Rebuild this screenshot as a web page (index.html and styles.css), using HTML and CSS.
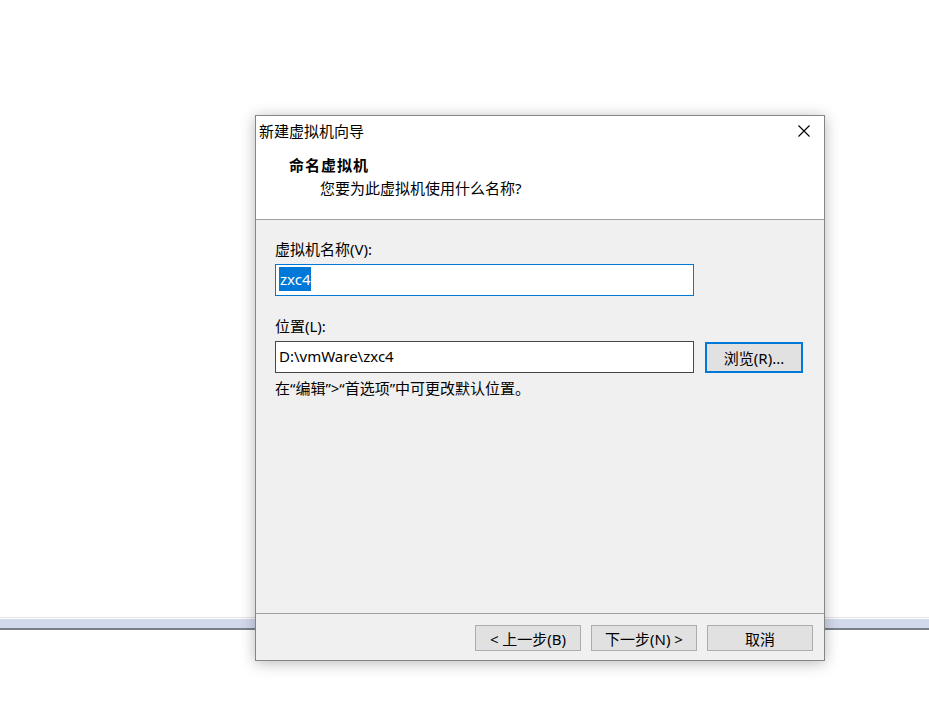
FILE: index.html
```html
<!DOCTYPE html>
<html>
<head>
    <title>新建虚拟机向导</title>
    <meta charset="UTF-8">
    <link rel="stylesheet" href="styles.css">
</head>
<body>
    <div class="desk-line">
        <div class="desk-band"></div>
    </div>

    <div class="dialog">
        <div class="header">
            <div class="titlebar">
                <span class="title">新建虚拟机向导</span>
                <svg class="close" width="12" height="12" viewBox="0 0 12 12">
                    <path d="M0.5 0.5 L11.5 11.5 M11.5 0.5 L0.5 11.5" stroke="#000" stroke-width="1.1" fill="none"/>
                </svg>
            </div>
            <div class="heading">命名虚拟机</div>
            <div class="subtitle">您要为此虚拟机使用什么名称?</div>
        </div>

        <div class="content">
            <div class="field">
                <label>虚拟机名称(V):</label>
                <div class="textbox focused"><span class="selected">zxc4</span></div>
            </div>

            <div class="field">
                <label>位置(L):</label>
                <div class="row">
                    <div class="textbox">D:\vmWare\zxc4</div>
                    <button class="btn browse">浏览(R)...</button>
                </div>
            </div>

            <div class="hint">在“编辑”&gt;“首选项”中可更改默认位置。</div>
        </div>

        <div class="footer">
            <button class="btn">&lt; 上一步(B)</button>
            <button class="btn">下一步(N) &gt;</button>
            <button class="btn">取消</button>
        </div>
    </div>
</body>
</html>
```

FILE: styles.css
```css
body {
    margin: 0;
    background: #fff;
    font-family: "Noto Sans", "Noto Sans CJK SC", sans-serif;
    font-size: 15px;
    color: #000;
}

/* полоса на фоне за окном */
.desk-line {
    margin-top: 617px;
    border-top: 1px solid #e2e2e2;
}

.desk-band {
    margin-top: 1px;
    height: 9px;
    background: #d3d9ec;
    border-bottom: 2px solid #7b818a;
}

.dialog {
    position: absolute;
    left: 255px;
    top: 115px;
    width: 570px;
    height: 546px;
    box-sizing: border-box;
    border: 1px solid #858585;
    background: #f0f0f0;
    box-shadow: 0 2px 14px rgba(0, 0, 0, 0.28);
    display: flex;
    flex-direction: column;
}

.header {
    height: 103px;
    background: #fff;
    border-bottom: 1px solid #a0a0a0;
}

.titlebar {
    display: flex;
    justify-content: space-between;
    align-items: center;
    height: 30px;
    padding: 0 14px 0 3px;
}

.title {
    line-height: 30px;
}

.close {
    display: block;
}

.heading {
    margin: 8px 0 0 33px;
    font-weight: bold;
    letter-spacing: 1px;
    line-height: 22px;
}

.subtitle {
    margin: 1px 0 0 64px;
    line-height: 22px;
}

.content {
    flex: 1;
    padding: 19px 0 0 19px;
}

.field {
    margin-bottom: 20px;
}

label {
    display: block;
    line-height: 20px;
    margin-bottom: 5px;
}

.row {
    display: flex;
    align-items: center;
    gap: 11px;
}

.textbox {
    width: 414px;
    height: 30px;
    border: 1px solid #474747;
    background: #fff;
    line-height: 28px;
    padding-left: 3px;
    box-sizing: content-box;
}

.textbox.focused {
    border-color: #0078d7;
}

.selected {
    background: #0078d7;
    color: #fff;
    padding: 2px 1px;
}

.hint {
    margin-top: -15px;
    line-height: 20px;
}

.btn {
    font-family: inherit;
    font-size: 15px;
    width: 106px;
    height: 26px;
    padding: 0;
    background: #e1e1e1;
    border: 1px solid #adadad;
    color: #000;
}

.btn.browse {
    width: 98px;
    height: 31px;
    border: 2px solid #0078d7;
}

.footer {
    border-top: 1px solid #a0a0a0;
    display: flex;
    justify-content: flex-end;
    gap: 10px;
    padding: 11px 11px 9px 0;
}
```
